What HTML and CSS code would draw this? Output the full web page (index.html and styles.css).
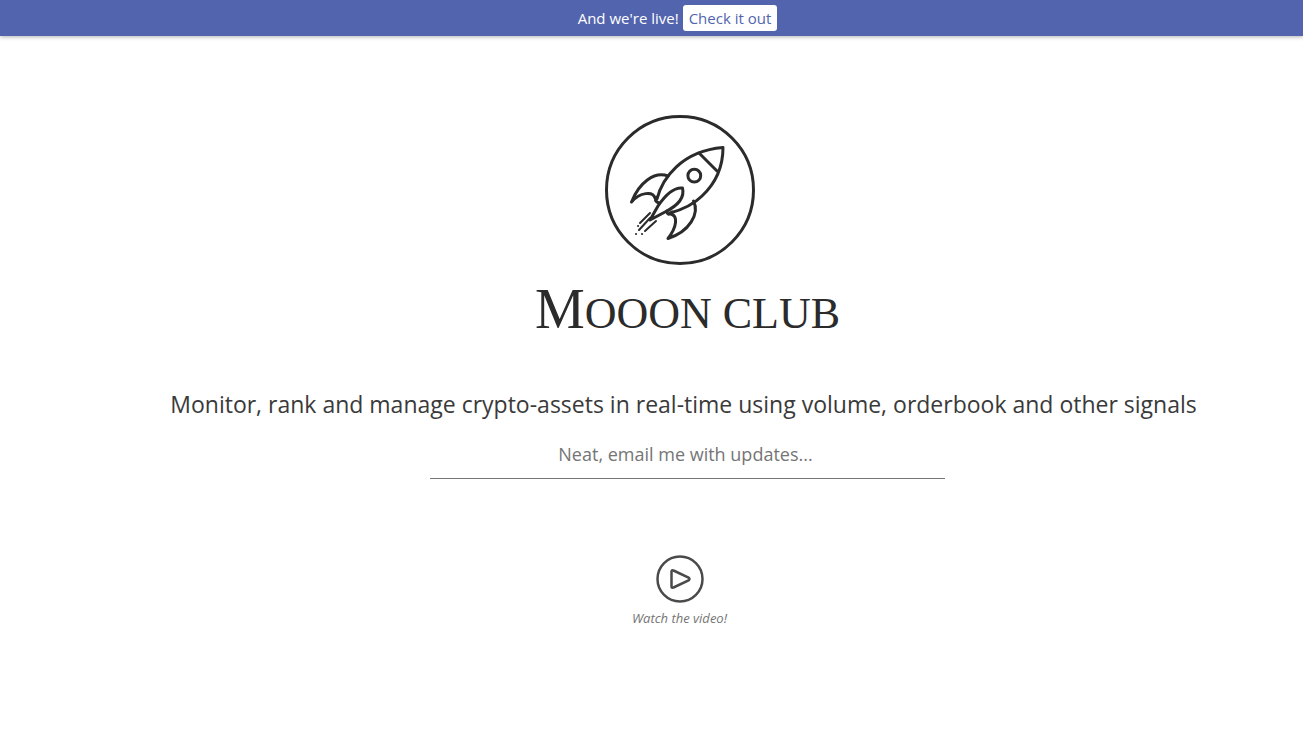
FILE: index.html
```html
<!DOCTYPE html>
<html lang="en">
<head>
    <meta charset="UTF-8">
    <meta name="viewport" content="width=device-width, initial-scale=1.0">
    <title>Mooon club</title>
    <link rel="stylesheet" href="styles.css">
</head>
<body>
    <div class="banner">
        <span>And we're live!</span>
        <a class="banner-link" href="#">Check it out</a>
    </div>

    <main class="landing">
        <svg class="logo" viewBox="0 0 150 150" aria-hidden="true">
            <circle cx="75" cy="75" r="73.5"/>
            <!-- hull -->
            <path d="M52 84C57 64 76 36 118 32.500C118 51 112 67 97 81C88 90 76 95 65 98"/>
            <path d="M94 38L112 56"/>
            <circle cx="89.300" cy="60.700" r="6.400"/>
            <!-- fins -->
            <path d="M63 61C49 56 34 68 26.500 87C35 77 48 76 50 83"/>
            <path d="M52 82C49 85 51 87 54 88M62 96C62 99 64 101 67 97"/>
            <path d="M88.500 86C95 99 84 117 63 123.500C72 112 73 101 66 99"/>
            <path d="M77.500 73C67 72 59 82 53 91L45 105L60 97C72 91 80 83 77.500 73Z"/>
            <!-- exhaust -->
            <path class="spark" d="M45 98L35 108M45 103L34 115M51 106L40 116"/>
            <path class="spark dots" d="M33 111h.1M31 119h.1M37 119h.1"/>
        </svg>
        <h1 class="name">M<span>ooon club</span></h1>

        <p class="tagline">Monitor, rank and manage crypto-assets in real-time using volume, orderbook and other signals</p>

        <form class="signup">
            <input type="email" name="email" aria-label="Email address" placeholder="Neat, email me with updates...">
        </form>

        <a class="video" href="#">
            <svg class="play" viewBox="0 0 48 48" aria-hidden="true">
                <circle cx="24" cy="24" r="22.500"/>
                <path d="M15.500 16.500V31.500Q15.500 33.500 17.500 32.500L32.500 25.500Q34.500 24 32.500 22.500L17.500 15.500Q15.500 14.500 15.500 16.500Z"/>
            </svg>
            <span>Watch the video!</span>
        </a>
    </main>
</body>
</html>
```

FILE: styles.css
```css
* {
    box-sizing: border-box;
}

body {
    margin: 0;
    background: #fff;
    color: #2b2b2b;
    font-family: "Open Sans", sans-serif;
}

.banner {
    display: flex;
    justify-content: center;
    align-items: center;
    gap: 4px;
    min-height: 36px;
    padding-left: 52px;
    background: #5264ae;
    color: #fff;
    font-size: 15px;
    box-shadow: 0 1px 4px rgba(0, 0, 0, 0.3);
}

.banner-link {
    padding: 0 6px;
    border-radius: 3px;
    background: #fff;
    color: #5264ae;
    line-height: 26px;
    text-decoration: none;
}

.landing {
    display: flex;
    flex-direction: column;
    align-items: center;
    padding: 79px 0 40px 56px;
}

.logo {
    width: 150px;
    height: 150px;
    fill: none;
    stroke: #2b2b2b;
    stroke-width: 3;
    stroke-linejoin: round;
    stroke-linecap: round;
}

.logo .spark {
    stroke-width: 2;
}

.name {
    margin: 12px 0 0;
    padding-left: 16px;
    font-family: "Liberation Serif", serif;
    font-size: 56px;
    font-weight: 400;
    line-height: 64px;
}

.name span {
    font-size: 44px;
    text-transform: uppercase;
}

.tagline {
    margin: 42px 0 0;
    padding-left: 8px;
    color: #3a3a3a;
    font-size: 23px;
    line-height: 32px;
    text-align: center;
}

.signup {
    width: 41.3%;
    margin: 9px 0 0 16px;
}

.signup input {
    width: 100%;
    height: 50px;
    padding: 0 4px 0 0;
    border: none;
    border-bottom: 1px solid #757575;
    background: none;
    font-family: inherit;
    font-size: 18px;
    text-align: center;
    outline: none;
}

.signup input::placeholder {
    color: #757575;
}

.video {
    display: flex;
    flex-direction: column;
    align-items: center;
    gap: 6px;
    margin-top: 76px;
    color: #757575;
    font-size: 13px;
    font-style: italic;
    line-height: 18px;
    text-decoration: none;
}

.play {
    width: 48px;
    height: 48px;
    fill: none;
    stroke: #4a4a4a;
    stroke-width: 2.5;
}
```
